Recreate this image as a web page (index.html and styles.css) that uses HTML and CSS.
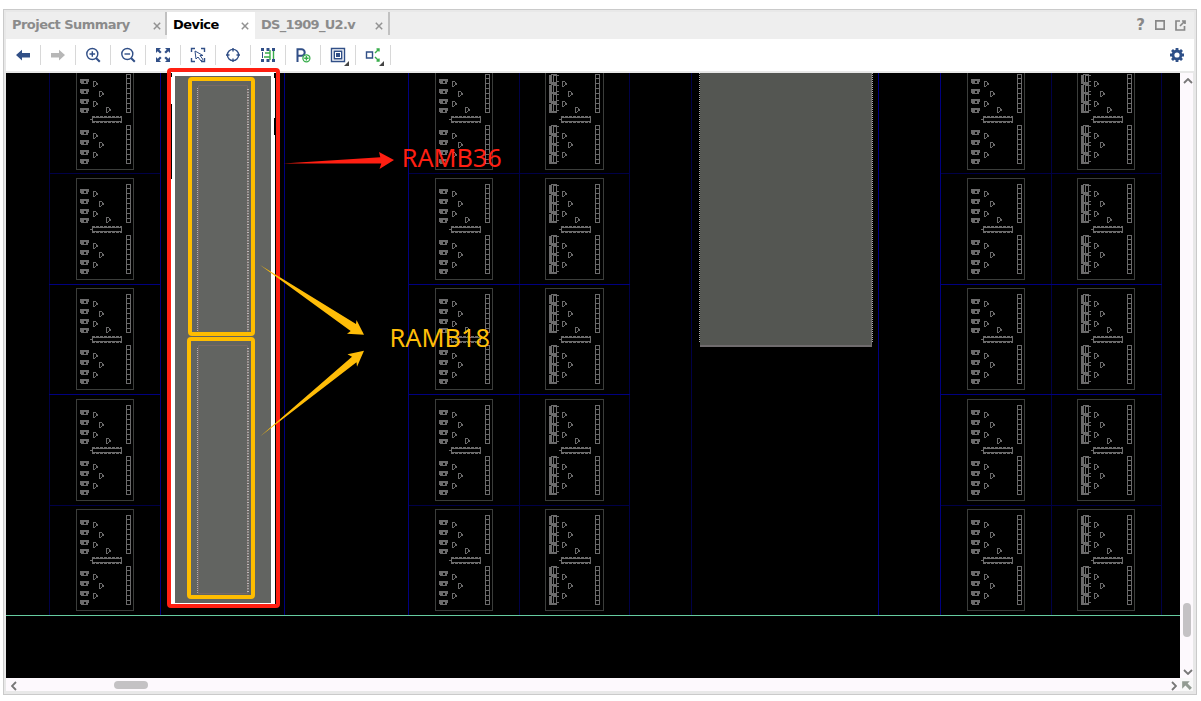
FILE: index.html
```html
<!DOCTYPE html>
<html lang="en">
<head>
<meta charset="utf-8">
<title>Device</title>
<link rel="stylesheet" href="styles.css">
</head>
<body>
<div class="window">
  <header class="tabs">
    <div class="tab tab-summary"><span>Project Summary</span><svg class="close" viewBox="0 0 8 8"><path d="M.8.8l6.4 6.4M7.2.8L.8 7.2"/></svg></div>
    <div class="tab tab-device"><span>Device</span><svg class="close" viewBox="0 0 8 8"><path d="M.8.8l6.4 6.4M7.2.8L.8 7.2"/></svg></div>
    <div class="tab tab-source"><span>DS_1909_U2.v</span><svg class="close" viewBox="0 0 8 8"><path d="M.8.8l6.4 6.4M7.2.8L.8 7.2"/></svg></div>
    <div class="controls">
      <span class="help">?</span>
      <svg width="10" height="10" viewBox="0 0 10 10"><path d="M.8.8h8.4v8.4H.8z"/></svg>
      <svg width="11" height="11" viewBox="0 0 11 11"><path d="M5 1H1v9h8.500V6M5 6l4-4M7 1h3v3"/></svg>
    </div>
  </header>
  <div class="toolbar">
    <div class="tool"><svg viewBox="0 0 20 20"><path class="solid" d="M3 10l6-5.200V8h8v4.500H9v3z"/></svg></div>
    <div class="tool"><svg viewBox="0 0 20 20"><path class="muted" d="M17 10l-6-5.200V8H3v4.500h8v3z"/></svg></div>
    <div class="tool"><svg viewBox="0 0 20 20"><circle cx="9.300" cy="9" r="5.500"/><path d="M6.500 9h5.600M9.300 6.200v5.600"/><path class="thick" d="M13 13l3.800 3.800"/></svg></div>
    <div class="tool"><svg viewBox="0 0 20 20"><circle cx="9.300" cy="9" r="5.500"/><path d="M6.500 9h5.600"/><path class="thick" d="M13 13l3.800 3.800"/></svg></div>
    <div class="tool"><svg viewBox="0 0 20 20"><path class="solid" d="M3 3h5L6.300 4.700 8.600 7 7 8.600 4.700 6.300 3 8zM17 3h-5l1.700 1.700L11.400 7 13 8.600l2.300-2.300L17 8zM3 17h5l-1.700-1.700L8.600 13 7 11.400l-2.300 2.300L3 12zM17 17h-5l1.700-1.700-2.300-2.300 1.600-1.600 2.300 2.300L17 12z"/></svg></div>
    <div class="tool"><svg viewBox="0 0 20 20"><path d="M3.500 7V3.500H7M13 3.500h3.500V7M3.500 13v3.500H7M16.500 13v3.500H13"/><path class="thin" d="M7 6l1 8 2-2 3 4 2-1.500-3-4h3z"/></svg></div>
    <div class="tool"><svg viewBox="0 0 20 20"><circle cx="10" cy="10" r="5.600"/><path d="M10 3v3.500M10 13.500V17M3 10h3.500M13.500 10H17"/></svg></div>
    <div class="tool"><svg viewBox="0 0 20 20"><path class="pins" d="M3 4.500h14M3 15.500h14"/><path class="thin" d="M4.500 7v6"/><path class="green" d="M7 8h5v4H6M12 5v3.500M12 12v3M15.500 6v8"/></svg></div>
    <div class="tool"><svg viewBox="0 0 20 20"><path class="thick" d="M4.500 17V4.300h4a3.200 3.200 0 0 1 0 6.400h-4"/><circle class="plus-bg" cx="13.400" cy="13.300" r="3.500"/><path class="green" d="M11.200 13.300h4.400M13.400 11.100v4.400"/></svg></div>
    <div class="tool"><svg viewBox="0 0 20 20"><path d="M3.500 3.500h13v13h-13zM6.300 6.300h7.400v7.400H6.300z"/><path class="solid" d="M8 8h4v4H8z"/><path class="corner" d="M21 16v5h-5z"/></svg></div>
    <div class="tool"><svg viewBox="0 0 20 20"><path d="M3.500 7h6v6h-6z"/><path class="green" d="M12 8l4-4M13.500 4H16v2.500M12 12l4 4M13.500 16H16v-2.500"/><path class="corner" d="M21 16v5h-5z"/></svg></div>
    <svg class="gear" viewBox="0 0 16 16"><circle cx="8" cy="8" r="4"/><path d="M8 1v2.500M8 12.500V15M1 8h2.500M12.500 8H15M3 3l1.800 1.800M11.200 11.200L13 13M13 3l-1.800 1.800M4.800 11.200L3 13"/></svg>
  </div>
  <main class="workspace">
    <svg class="canvas" viewBox="6 73 1174 605">
      <defs>
        <path id="lut" d="M0 0h9v3H8v2H1V4H0zM4 2v2h2V2z" fill-rule="evenodd"/>
        <path id="gate" d="M0 0h3v1h1v1h1v2H3v1H2v1H0zM1 1v4h1V4h1V1z" fill-rule="evenodd"/>
        <g id="gates" class="fill">
          <use href="#gate" x="17" y="13"/><use href="#gate" x="23" y="23"/><use href="#gate" x="17" y="33"/><use href="#gate" x="30" y="39"/>
          <use href="#gate" x="17" y="65"/><use href="#gate" x="23" y="74"/><use href="#gate" x="17" y="84"/>
        </g>
        <g id="flops">
          <path d="M50.500 6.500h4v38h-4zM50.500 57.500h4v38h-4z"/>
          <path d="M50 10.500h5M50 15.500h5M50 20.500h5M50 25.500h5M50 30.500h5M50 35.500h5M50 40.500h5M50 61.500h5M50 66.500h5M50 71.500h5M50 76.500h5M50 81.500h5M50 86.500h5M50 91.500h5"/>
        </g>
        <g id="carry">
          <path d="M14 51.500h2M16.500 49.500h29v4h-29z"/>
          <path d="M16 48.500h30M16 54.500h30" stroke-dasharray="3 1"/>
        </g>
        <g id="slicel">
          <g class="fill"><use href="#lut" x="4" y="11"/><use href="#lut" x="4" y="21"/><use href="#lut" x="4" y="31"/><use href="#lut" x="4" y="40"/><use href="#lut" x="4" y="62"/><use href="#lut" x="4" y="72"/><use href="#lut" x="4" y="82"/><use href="#lut" x="4" y="91"/></g>
          <use href="#gates"/>
          <g class="logic"><use href="#flops"/><use href="#carry"/></g>
        </g>
        <g id="ram">
          <path class="fill" d="M0 1h2V0h6v1h2v1H8v5h2v1H8v2H0z"/>
          <path class="hole" d="M3 1h1v7H3zM5 2h2v6H5z"/>
        </g>
        <g id="slicem">
          <use href="#ram" x="4" y="6"/><use href="#ram" x="4" y="16"/><use href="#ram" x="4" y="25"/><use href="#ram" x="4" y="35"/>
          <use href="#ram" x="4" y="57"/><use href="#ram" x="4" y="67"/><use href="#ram" x="4" y="76"/><use href="#ram" x="4" y="86"/>
          <use href="#gates"/>
          <g class="logic"><use href="#flops"/><use href="#carry"/></g>
        </g>
        <g id="slice-row">
          <path class="frame" d="M76.500.5h57v101h-57zM435.500.5h57v101h-57zM545.500.5h58v101h-58zM967.500.5h57v101h-57zM1077.500.5h57v101h-57z"/>
          <use href="#slicel" x="76"/><use href="#slicel" x="435"/><use href="#slicem" x="545"/><use href="#slicel" x="967"/><use href="#slicem" x="1077"/>
        </g>
      </defs>
      <g class="grid">
        <path class="dim" d="M49.500 73v542M519.500 73v542M629.500 73v542M691.500 73v542M1051.500 73v542M1161.500 73v542M49 173.500h111M408 173.500h222M940 173.500h222M49 505.500h111M408 505.500h222M940 505.500h222"/>
        <path d="M160.500 73v542M284.500 73v542M408.500 73v542M878.500 73v542M940.500 73v542M49 284.500h111M408 284.500h222M940 284.500h222M49 394.500h111M408 394.500h222M940 394.500h222"/>
      </g>
      <use href="#slice-row" y="68"/><use href="#slice-row" y="178"/><use href="#slice-row" y="288"/><use href="#slice-row" y="399"/><use href="#slice-row" y="509"/>
      <path class="clock-edge" d="M6 615.500h1174"/>
      <path class="block" d="M700 73h172v272H700z"/>
      <path class="block-foot" d="M700 345h172v2H700z"/>
      <path class="pads" d="M699.500 73v269M872.500 73v269"/>
      <path class="block-foot" d="M871 73h1v272h-1z"/>
    </svg>
    <div class="vscroll"><svg viewBox="0 0 10 6"><path d="M1 5l4-4 4 4"/></svg><i></i><svg viewBox="0 0 10 6"><path d="M1 1l4 4 4-4"/></svg></div>
    <div class="hscroll"><svg viewBox="0 0 6 10"><path d="M5 1L1 5l4 4"/></svg><i></i><svg viewBox="0 0 6 10"><path d="M1 1l4 4-4 4"/></svg></div>
    <svg class="locator" viewBox="0 0 12 12"><path d="M2 3h7L7 5l4 4-2 2-4-4-3 3z"/></svg>
  </main>
</div>
<svg class="annotations" viewBox="0 0 1201 701">
  <path fill="#fff" d="M171 72h104v532H171z"/>
  <path fill="#000" d="M171 73h1v4h-1zM171 104h1v75h-1zM275 73h1v531h-1zM274 73h1v5h-1zM274 118h1v17h-1z"/>
  <path fill="#626461" d="M175 76h96v527h-96z"/>
  <g class="ram-outline"><path d="M198.500 332V85.500h49V332M198.500 593V345.500h49V593M198 593.500h50"/></g>
  <path class="left-pads" d="M197.500 88v244M197.500 348v245"/>
  <path class="right-pads" d="M248 89v243M248 348v245"/>
  <rect x="169" y="70" width="109" height="536" rx="2" class="red-box"/>
  <rect x="190" y="79" width="63" height="255" rx="2" class="yellow-box"/>
  <rect x="189" y="339" width="64" height="258" rx="2" class="yellow-box"/>
  <path class="red" d="M283 163.400L380.300 157.300 379 152l15 8-14.500 9 1.800-5.600z"/>
  <path class="yellow" d="M260 265l96 59 .5-4 7.500 14.800-17-1 3.700-2.800zM260 436.500l92-79.800-4.500-2.500 16.500-3.400-7 16-.5-4.500z"/>
  <text class="red" x="401.700" y="167" textLength="100" lengthAdjust="spacingAndGlyphs">RAMB36</text>
  <text class="yellow" x="389.500" y="347" textLength="100.500" lengthAdjust="spacingAndGlyphs">RAMB18</text>
</svg>
</body>
</html>
```
FILE: styles.css
```css
* { box-sizing: border-box; }
body { margin: 0; width: 1201px; height: 701px; background: #fff; overflow: hidden; padding: 9px 0 0 3px; font-family: "DejaVu Sans", sans-serif; }
svg { display: block; fill: none; }
.window { width: 1194px; height: 686px; border: 1px solid #cacaca; background: #e8e8e8; padding: 2px; }
.tabs { display: flex; height: 27px; background: #eee; }
.tab { display: flex; align-items: center; justify-content: space-between; font-size: 13px; letter-spacing: -0.55px; font-weight: bold; color: #8b8b8b; white-space: nowrap; }
.tab span { padding-top: 2px; }
.tab-summary { width: 161px; padding-left: 6px; padding-right: 4px; border-right: 2px solid #c1c1c1; }
.tab-device { width: 88px; background: #fff; color: #000; padding: 0 6px 4px; }
.tab-source { width: 135px; padding-left: 6px; padding-right: 5px; border-right: 2px solid #c1c1c1; letter-spacing: -0.7px; }
.tab-summary, .tab-source { height: 23px; margin-bottom: 4px; }
.close { width: 8px; height: 8px; stroke: #929292; stroke-width: 1.5; margin-top: 5px; }
.controls { margin-left: auto; display: flex; align-items: center; gap: 10px; padding: 0 8px 1px 0; color: #888; }
.controls svg { stroke: #888; stroke-width: 1.7; }
.help { font-size: 15px; font-weight: bold; }
.toolbar { height: 32px; background: #fff; display: flex; align-items: center; }
.tool { width: 35px; height: 20px; border-right: 1px solid #d8d8d8; padding-left: 7px; }
.tool svg { width: 20px; height: 20px; overflow: visible; stroke: #314f87; stroke-width: 1.4; }
.tool .solid { fill: #314f87; stroke: none; }
.tool .muted { fill: #b7b7b7; stroke: none; }
.tool .thick { stroke-width: 2; }
.tool .thin { stroke-width: 1; }
.tool .green { stroke: #38ad4b; stroke-width: 1.4; }
.tool .pins { stroke-width: 3; stroke-dasharray: 3 2.5; }
.tool .plus-bg { fill: #fff; stroke: #38ad4b; stroke-width: 1.3; }
.tool .corner { fill: #444; stroke: none; }
.gear { width: 16px; height: 16px; margin: 0 9px 0 auto; stroke: #2f5088; stroke-width: 2.8; }
.workspace { margin-top: 2px; display: grid; grid-template: 605px 13px / 1174px 13px; }
.canvas { width: 1174px; height: 605px; background: #000; shape-rendering: crispEdges; }
.grid { stroke: #000080; }
.grid .dim { stroke: #000047; }
.frame { stroke: #3b3d3b; }
.logic { stroke: #6c6b6c; }
.fill { fill: #6c6b6c; }
.hole { fill: #000; }
.clock-edge { stroke: #66cba0; }
.block { fill: #545652; }
.block-foot { fill: #706c6e; }
.pads { stroke: #aaa; stroke-dasharray: 1 1; }
.vscroll, .hscroll { background: #fdf9fd; display: flex; align-items: center; }
.vscroll { flex-direction: column; padding: 5px 0 3px 2px; }
.vscroll svg { width: 10px; height: 6px; }
.vscroll i { width: 8px; height: 34px; border-radius: 4px; background: #c4c2c4; margin: 519px 1px auto 0; }
.hscroll { padding: 2px 3px 0 5px; }
.hscroll svg { width: 6px; height: 10px; }
.hscroll i { width: 34px; height: 8px; border-radius: 4px; background: #c4c2c4; margin: 0 auto 1px 97px; }
.vscroll svg, .hscroll svg { stroke: #777; stroke-width: 1.8; }
.locator { width: 13px; height: 13px; background: #f8f8f8; fill: #929b92; }
.annotations { position: absolute; left: 0; top: 0; width: 1201px; height: 701px; pointer-events: none; }
.annotations text { font: 25px "Noto Sans", "Open Sans", sans-serif; }
.red { fill: #ff1f12; }
.yellow { fill: #ffbd08; }
.red-box { stroke: #ff1f12; stroke-width: 4; }
.yellow-box { stroke: #ffbd00; stroke-width: 4; }
.ram-outline { stroke: #776866; }
.left-pads { stroke: #b5adb0; stroke-dasharray: 1 1; }
.right-pads { stroke: #c0bbbc; stroke-width: 2; stroke-dasharray: 1 1.7; }
```
